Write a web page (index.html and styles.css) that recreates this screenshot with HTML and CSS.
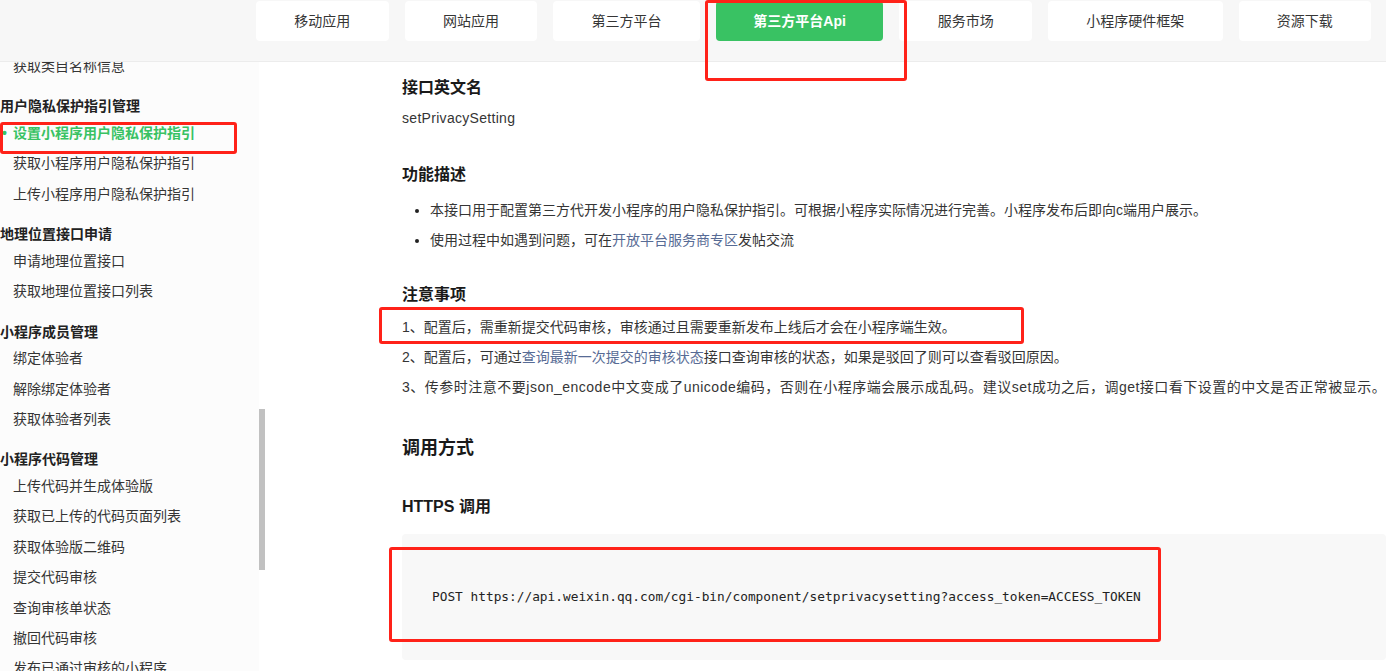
FILE: index.html
```html
<!DOCTYPE html>
<html lang="zh-CN">

<head>
    <meta charset="UTF-8">
    <meta name="viewport" content="width=device-width, initial-scale=1.0">
    <title>设置小程序用户隐私保护指引</title>
    <link rel="stylesheet" href="styles.css">
</head>

<body>
    <div class="top_bar">
        <div class="nav">
            <a href="#" class="nav_item">移动应用</a>
            <a href="#" class="nav_item">网站应用</a>
            <a href="#" class="nav_item">第三方平台</a>
            <a href="#" class="nav_item on">第三方平台Api</a>
            <a href="#" class="nav_item">服务市场</a>
            <a href="#" class="nav_item">小程序硬件框架</a>
            <a href="#" class="nav_item">资源下载</a>
        </div>
    </div>

    <div class="page">
        <div class="side_wrap">
            <div class="sidebar">
                <ul class="menu">
                    <li class="item">获取类目名称信息</li>
                    <li class="group">用户隐私保护指引管理</li>
                    <li class="item on">设置小程序用户隐私保护指引</li>
                    <li class="item">获取小程序用户隐私保护指引</li>
                    <li class="item">上传小程序用户隐私保护指引</li>
                    <li class="group">地理位置接口申请</li>
                    <li class="item">申请地理位置接口</li>
                    <li class="item">获取地理位置接口列表</li>
                    <li class="group">小程序成员管理</li>
                    <li class="item">绑定体验者</li>
                    <li class="item">解除绑定体验者</li>
                    <li class="item">获取体验者列表</li>
                    <li class="group">小程序代码管理</li>
                    <li class="item">上传代码并生成体验版</li>
                    <li class="item">获取已上传的代码页面列表</li>
                    <li class="item">获取体验版二维码</li>
                    <li class="item">提交代码审核</li>
                    <li class="item">查询审核单状态</li>
                    <li class="item">撤回代码审核</li>
                    <li class="item">发布已通过审核的小程序</li>
                </ul>
            </div>
            <div class="scroll_track">
                <div class="scroll_thumb"></div>
            </div>
        </div>

        <div class="content">
            <h3 class="sec_title first">接口英文名</h3>
            <p class="api_name">setPrivacySetting</p>

            <h3 class="sec_title">功能描述</h3>
            <ul class="desc_list">
                <li>本接口用于配置第三方代开发小程序的用户隐私保护指引。可根据小程序实际情况进行完善。小程序发布后即向c端用户展示。</li>
                <li>使用过程中如遇到问题，可在<a href="#">开放平台服务商专区</a>发帖交流</li>
            </ul>

            <h3 class="sec_title notes_title">注意事项</h3>
            <div class="notes">
                <p>1、配置后，需重新提交代码审核，审核通过且需要重新发布上线后才会在小程序端生效。</p>
                <p>2、配置后，可通过<a href="#">查询最新一次提交的审核状态</a>接口查询审核的状态，如果是驳回了则可以查看驳回原因。</p>
                <p class="wide">3、传参时注意不要json_encode中文变成了unicode编码，否则在小程序端会展示成乱码。建议set成功之后，调get接口看下设置的中文是否正常被显示。</p>
            </div>

            <h2 class="call_title">调用方式</h2>
            <h3 class="sec_title https_title">HTTPS 调用</h3>
            <pre class="code_box">POST https://api.weixin.qq.com/cgi-bin/component/setprivacysetting?access_token=ACCESS_TOKEN</pre>
        </div>
    </div>

    <!-- 截图上的红色标注框 -->
    <div class="mark mark_side"></div>
    <div class="mark mark_tab"></div>
    <div class="mark mark_note"></div>
    <div class="mark mark_code"></div>
</body>

</html>
```

FILE: styles.css
```css
* {
    margin: 0;
    padding: 0;
    box-sizing: border-box;
}

body {
    position: relative;
    height: 671px;
    overflow: hidden;
    font-family: "Liberation Sans", "Noto Sans CJK SC", sans-serif;
    font-size: 14px;
    color: #353535;
    background: #fff;
}

a {
    text-decoration: none;
    color: #576b95;
}

ul {
    list-style: none;
}

/* 顶部导航 */
.top_bar {
    height: 62px;
    background: #f7f7f7;
    border-bottom: 1px solid #ececec;
}

.nav {
    display: flex;
    gap: 16px;
    padding: 1px 0 0 256px;
}

.nav_item {
    height: 40px;
    padding: 0 38.3px;
    line-height: 40px;
    background: #fff;
    border-radius: 4px;
    color: #353535;
    white-space: nowrap;
}

.nav_item.on {
    padding: 0 37.5px;
    background: #39c263;
    color: #fff;
    font-weight: bold;
}

/* 页面主体 */
.page {
    display: flex;
    height: 609px;
    overflow: hidden;
}

.side_wrap {
    display: flex;
    flex-shrink: 0;
}

.sidebar {
    width: 259px;
    height: 609px;
    overflow: hidden;
    background: #fcfcfc;
}

.menu {
    margin-top: -11px;
}

.menu .item {
    padding-left: 13px;
    line-height: 30.4px;
    color: #353535;
    white-space: nowrap;
}

.menu .item.on {
    color: #39c263;
    font-weight: bold;
}

.menu .item.on::before {
    content: "•";
    display: inline-block;
    width: 11px;
    margin-left: -11px;
}

.menu .group {
    margin-top: 15px;
    line-height: 21.6px;
    font-weight: bold;
    color: #222;
    white-space: nowrap;
}

.scroll_track {
    width: 6px;
    background: #fff;
}

.scroll_thumb {
    height: 161px;
    margin-top: 347px;
    background: #c1c1c1;
}

/* 内容 */
.content {
    flex: 1;
    padding: 14px 24px 0 137px;
}

.sec_title {
    font-size: 16px;
    line-height: 24px;
    color: #1a1a1a;
    margin-top: 33px;
}

.sec_title.first {
    margin-top: 0;
}

.api_name {
    margin-top: 6px;
    line-height: 24px;
    letter-spacing: 0.3px;
}

.desc_list {
    margin-top: 8px;
    padding-left: 28px;
    list-style: disc;
}

.desc_list li {
    line-height: 30px;
    white-space: nowrap;
}

.desc_list li::marker {
    color: #222;
}

.notes_title {
    margin-top: 28px;
}

.notes {
    margin-top: 5px;
}

.notes p {
    line-height: 30px;
    white-space: nowrap;
}

.notes p.wide {
    letter-spacing: 0.5px;
}

.call_title {
    margin-top: 33px;
    font-size: 18px;
    line-height: 26px;
    color: #1a1a1a;
}

.https_title {
    margin-top: 34px;
}

.code_box {
    margin-top: 15px;
    padding: 54px 30px;
    background: #f8f8f8;
    border-radius: 4px;
    font-family: "DejaVu Sans Mono", monospace;
    font-size: 12.8px;
    line-height: 18px;
    color: #222;
}

/* 红色标注框 */
.mark {
    position: absolute;
    border: 3px solid #ff2219;
    border-radius: 3px;
}

.mark_side {
    left: 0;
    top: 122px;
    width: 237px;
    height: 32px;
}

.mark_tab {
    left: 705px;
    top: 0;
    width: 202px;
    height: 81px;
}

.mark_note {
    left: 379px;
    top: 307px;
    width: 645px;
    height: 37px;
}

.mark_code {
    left: 389px;
    top: 547px;
    width: 772px;
    height: 95px;
}
```
